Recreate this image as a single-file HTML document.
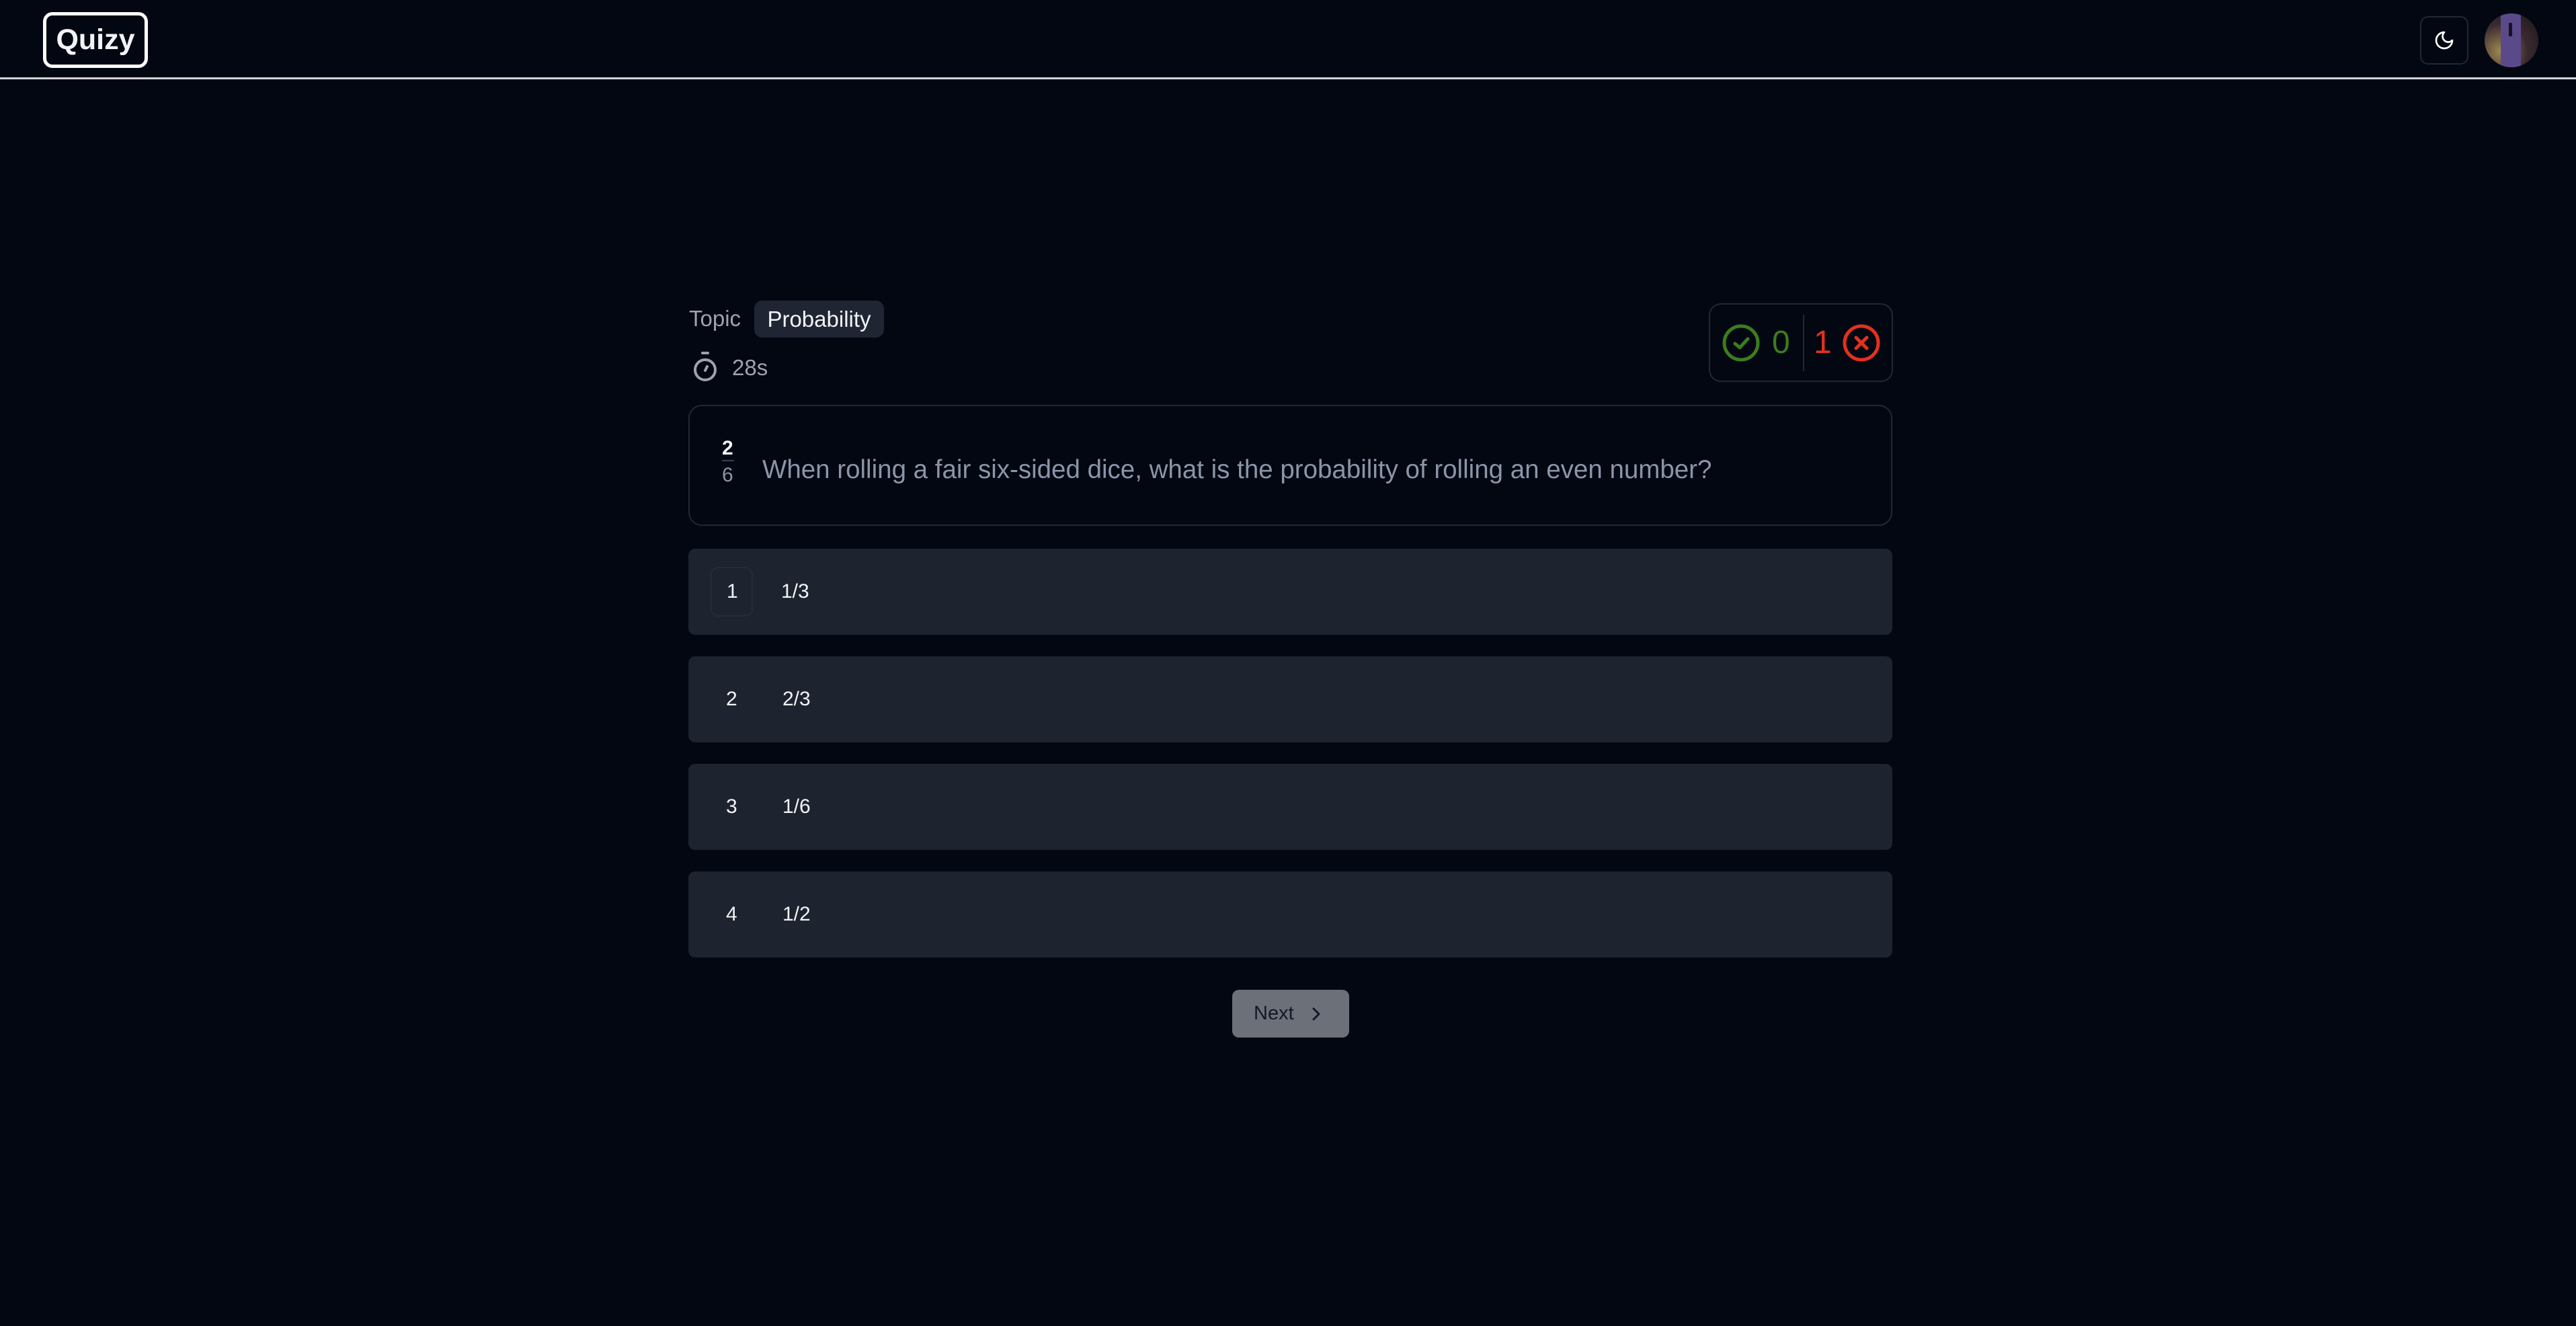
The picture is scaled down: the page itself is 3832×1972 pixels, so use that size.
<!DOCTYPE html>
<html><head><meta charset="utf-8"><style>
*{box-sizing:border-box;margin:0;padding:0}
body{width:3832px;height:1972px;background:#030712;font-family:"Liberation Sans",sans-serif;position:relative;overflow:hidden;color:#f9fafb}
.abs{position:absolute}
.hdr{left:0;top:0;width:3832px;height:118px;border-bottom:3px solid #d1d5db;background:#030712}
.logo{left:64px;top:18px;width:156px;height:83px;border:5px solid #fff;border-radius:14px;font-weight:bold;font-size:43px;display:flex;align-items:center;justify-content:center;color:#f3f4f6}
.theme{left:3600px;top:24px;width:72px;height:72px;border:2px solid #1f2937;border-radius:12px;display:flex;align-items:center;justify-content:center}
.avatar{left:3696px;top:20px;width:80px;height:80px;border-radius:50%;background:radial-gradient(circle at 30% 70%,#a08a50,#3a2a30 50%,#1a1418);overflow:hidden}
.opt{left:1024px;width:1791px;height:128px;background:#1e2330;border-radius:10px;font-size:30px;color:#f3f4f6}
.opt .n{position:absolute;left:56px;top:0;line-height:128px}
.opt .t{position:absolute;left:140px;top:0;line-height:128px}
</style></head><body>
<div class="abs hdr"></div>
<div class="abs logo">Quizy</div>
<div class="abs theme"><svg width="32" height="32" viewBox="0 0 24 24" fill="none" stroke="#fff" stroke-width="2" stroke-linecap="round" stroke-linejoin="round"><path d="M12 3a6 6 0 0 0 9 9 9 9 0 1 1-9-9Z"/></svg></div>
<div class="abs avatar"><div class="abs" style="left:24px;top:0;width:30px;height:80px;background:#5b4a8a"></div><div class="abs" style="left:36px;top:14px;width:5px;height:20px;background:#1a1020"></div></div>

<div class="abs" style="left:1025px;top:450px;font-size:33px;color:#9ca3af;line-height:48px">Topic</div>
<div class="abs" style="left:1122px;top:447px;width:193px;height:55px;background:#1f2533;border-radius:12px;font-size:33px;color:#f3f4f6;display:flex;align-items:center;justify-content:center">Probability</div>
<svg class="abs" style="left:1030px;top:522px" width="38" height="46" viewBox="0 0 38 46" fill="none" stroke="#9ca3af" stroke-width="4" stroke-linecap="round"><line x1="15" y1="3" x2="23" y2="3"/><circle cx="19" cy="28" r="15"/><line x1="19" y1="29" x2="22" y2="23"/></svg>
<div class="abs" style="left:1089px;top:527px;font-size:33px;color:#9ca3af;line-height:40px">28s</div>

<div class="abs" style="left:2542px;top:451px;width:274px;height:117px;border:2px solid #1f2937;border-radius:18px"></div>
<svg class="abs" style="left:2561px;top:481px" width="58" height="58" viewBox="0 0 58 58" fill="none" stroke="#3b7d1e" stroke-width="5" stroke-linecap="round" stroke-linejoin="round"><circle cx="29" cy="29" r="25"/><path d="M20 30l7 6 12-13"/></svg>
<div class="abs" style="left:2636px;top:484px;font-size:48px;color:#3b7d1e;line-height:52px">0</div>
<div class="abs" style="left:2682px;top:468px;width:2px;height:84px;background:#1f2937"></div>
<div class="abs" style="left:2698px;top:484px;font-size:48px;color:#e5301e;line-height:52px">1</div>
<svg class="abs" style="left:2740px;top:481px" width="58" height="58" viewBox="0 0 58 58" fill="none" stroke="#e5301e" stroke-width="5" stroke-linecap="round"><circle cx="29" cy="29" r="25"/><path d="M21 21l16 16M37 21L21 37"/></svg>

<div class="abs" style="left:1024px;top:602px;width:1791px;height:180px;border:2px solid #1f2937;border-radius:20px"></div>
<div class="abs" style="left:1074px;top:650px;font-size:30px;font-weight:bold;color:#f3f4f6;line-height:34px">2</div>
<div class="abs" style="left:1074px;top:684px;width:18px;height:2px;background:#374151"></div>
<div class="abs" style="left:1074px;top:690px;font-size:30px;color:#8b95a8;line-height:34px">6</div>
<div class="abs" style="left:1134px;top:676px;font-size:38.5px;color:#8b95a8;line-height:46px">When rolling a fair six-sided dice, what is the probability of rolling an even number?</div>

<div class="abs opt" style="top:816px"><div class="abs" style="left:33px;top:27px;width:63px;height:74px;border:2px solid #262c3a;border-radius:12px"></div><span class="n" style="left:57px">1</span><span class="t" style="left:138px">1/3</span></div>
<div class="abs opt" style="top:976px"><span class="n">2</span><span class="t">2/3</span></div>
<div class="abs opt" style="top:1136px"><span class="n">3</span><span class="t">1/6</span></div>
<div class="abs opt" style="top:1296px"><span class="n">4</span><span class="t">1/2</span></div>

<div class="abs" style="left:1833px;top:1472px;width:174px;height:71px;background:#6b7079;border-radius:10px;font-size:29px;color:#111827;display:flex;align-items:center;padding-left:32px">Next<svg style="margin-left:26px" width="14" height="22" viewBox="0 0 14 22" fill="none" stroke="#111827" stroke-width="3" stroke-linecap="round" stroke-linejoin="round"><path d="M3 3l8 8-8 8"/></svg></div>
</body></html>
